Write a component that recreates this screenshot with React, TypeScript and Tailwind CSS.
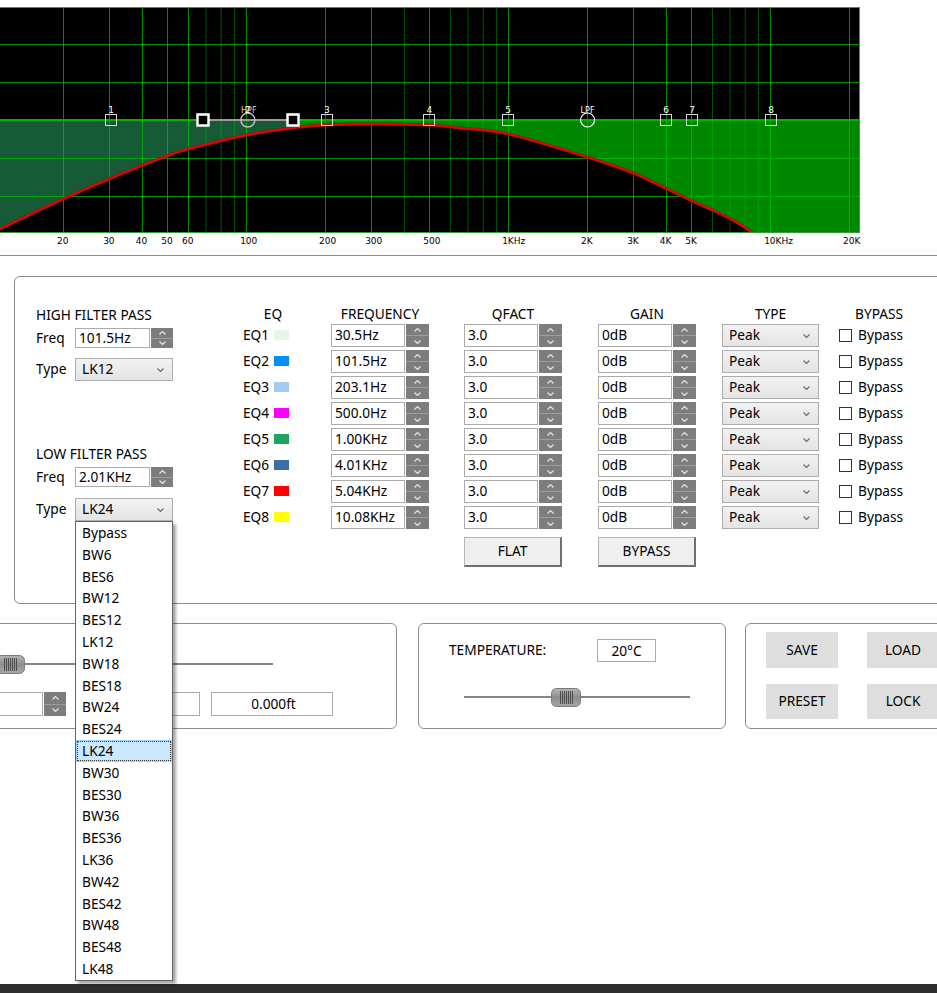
import React from 'react';

// ---- graph helpers ----
const X = (f: number) => 63 + 262 * Math.log10(f / 20);

const curvePts: [number, number][] = [
  [0, 229], [63, 199], [109, 179], [143, 165], [167, 156], [188, 149], [247, 135],
  [293, 128], [325, 125], [371, 124], [429, 125], [460, 128], [508, 134], [587, 157],
  [633, 173], [665, 188], [690, 200], [729, 218], [753, 233], [780, 250],
];

function sample(pts: [number, number][]) {
  const out: [number, number][] = [];
  const n = pts.length;
  for (let i = 0; i < n - 1; i++) {
    const p0 = pts[Math.max(i - 1, 0)];
    const p1 = pts[i];
    const p2 = pts[i + 1];
    const p3 = pts[Math.min(i + 2, n - 1)];
    for (let s = 0; s < 10; s++) {
      const t = s / 10;
      const t2 = t * t;
      const t3 = t2 * t;
      const c = (k: number) =>
        0.5 *
        (2 * p1[k] +
          (-p0[k] + p2[k]) * t +
          (2 * p0[k] - 5 * p1[k] + 4 * p2[k] - p3[k]) * t2 +
          (-p0[k] + 3 * p1[k] - 3 * p2[k] + p3[k]) * t3);
      out.push([c(0), c(1)]);
    }
  }
  out.push(pts[n - 1]);
  return out;
}

const majorF = [20, 30, 40, 50, 60, 100, 200, 300, 500, 1000, 2000, 3000, 4000, 5000, 10000, 20000];
const minorF = [70, 80, 90, 400, 600, 700, 800, 900, 6000, 7000, 8000, 9000];
const axisLabels: [number, string][] = [
  [20, '20'], [30, '30'], [40, '40'], [50, '50'], [60, '60'], [100, '100'], [200, '200'],
  [300, '300'], [500, '500'], [1000, '1KHz'], [2000, '2K'], [3000, '3K'], [4000, '4K'],
  [5000, '5K'], [10000, '10KHz'], [20000, '20K'],
];
const eqPoints: [string, number][] = [
  ['1', 30.5], ['3', 203.1], ['4', 500], ['5', 1000], ['6', 4010], ['7', 5040], ['8', 10080],
];

function Graph() {
  const curve = sample(curvePts);
  const str = (a: [number, number][]) => a.map((p) => `${p[0].toFixed(1)},${p[1].toFixed(1)}`).join(' ');
  const left: [number, number][] = [[0, 120], [293, 120], ...curve.filter((p) => p[0] <= 293).reverse()];
  const right: [number, number][] = [
    [293, 120], [860, 120], [860, 260], [780, 260],
    ...curve.filter((p) => p[0] >= 293).reverse(),
  ];
  const hpf = X(101.5);
  const lpf = X(2010);

  return (
    <svg width={937} height={250} className="block shrink-0" fontFamily="'DejaVu Sans', Verdana, sans-serif">
      <defs>
        <clipPath id="plot">
          <rect x={0} y={7} width={860} height={226} />
        </clipPath>
      </defs>
      <rect x={0} y={7} width={860} height={226} fill="#000" />
      <g clipPath="url(#plot)">
        <polygon points={str(left)} fill="#165a36" />
        <polygon points={str(right)} fill="#008700" />
        {minorF.map((f) => (
          <line key={f} x1={X(f) + 0.5} x2={X(f) + 0.5} y1={7} y2={233} stroke="#00c000" strokeOpacity={0.45} />
        ))}
        {majorF.map((f) => (
          <line key={f} x1={Math.round(X(f)) + 0.5} x2={Math.round(X(f)) + 0.5} y1={7} y2={233} stroke="#00c000" strokeOpacity={0.72} />
        ))}
        {[44.5, 82.5, 158.5, 196.5].map((y) => (
          <line key={y} x1={0} x2={860} y1={y} y2={y} stroke="#00c000" strokeOpacity={0.72} />
        ))}
        <line x1={0} x2={860} y1={120} y2={120} stroke="#00b400" strokeWidth={2} />
        <polyline points={str(curve)} fill="none" stroke="#8a1a10" strokeWidth={3} />
        <polyline points={str(curve)} fill="none" stroke="#f00000" strokeWidth={1.6} />
      </g>
      <line x1={0} x2={860} y1={7.5} y2={7.5} stroke="#3c9c3c" />
      <line x1={0} x2={860} y1={232.5} y2={232.5} stroke="#3c9c3c" />
      <line x1={859.5} x2={859.5} y1={7} y2={233} stroke="#3c9c3c" />

      {/* HPF handle */}
      <line x1={203} x2={293} y1={120} y2={120} stroke="#9a9a9a" strokeWidth={2} />
      <rect x={197.5} y={114.5} width={11} height={11} fill="#000" stroke="#fff" strokeWidth={2.5} />
      <rect x={287.5} y={114.5} width={11} height={11} fill="#000" stroke="#fff" strokeWidth={2.5} />
      <circle cx={hpf} cy={120} r={7} fill="none" stroke="#bdbdbd" strokeWidth={1.5} />
      <text x={hpf + 1} y={113} fontSize={8} fill="#e6c8b0" textAnchor="middle">HPF</text>
      <text x={hpf} y={113} fontSize={9} fill="#fff" textAnchor="middle">2</text>

      {/* LPF */}
      <circle cx={lpf} cy={120} r={7} fill="none" stroke="#fff" strokeWidth={1.2} />
      <text x={lpf} y={113} fontSize={8} fill="#fff" textAnchor="middle">LPF</text>

      {eqPoints.map(([n, f]) => (
        <g key={n}>
          <rect x={Math.round(X(f)) - 5.5} y={114.5} width={11} height={11} fill="none" stroke="#d8d8d8" />
          <text x={X(f)} y={113} fontSize={9} fill="#fff" textAnchor="middle">{n}</text>
        </g>
      ))}

      {axisLabels.map(([f, t]) => (
        <text key={t} x={X(f) - 6} y={244} fontSize={9} fill="#000">{t}</text>
      ))}
    </svg>
  );
}

// ---- controls ----
function Chevron({ up, color = '#e4e4e4' }: { up?: boolean; color?: string }) {
  return (
    <svg width={7} height={4} className="block">
      <polyline
        points={up ? '0.5,3.5 3.5,0.5 6.5,3.5' : '0.5,0.5 3.5,3.5 6.5,0.5'}
        fill="none"
        stroke={color}
        strokeWidth={1.2}
      />
    </svg>
  );
}

function Spin({ className }: { className: string }) {
  return (
    <div className={`flex h-full shrink-0 flex-col bg-[#7d7d7d] ${className}`}>
      <div className="flex flex-1 items-center justify-center border-b border-[#9c9c9c]">
        <Chevron up />
      </div>
      <div className="flex flex-1 items-center justify-center">
        <Chevron />
      </div>
    </div>
  );
}

function Select({ value, className }: { value: string; className: string }) {
  return (
    <div
      className={`flex h-full shrink-0 items-center justify-between border border-[#adadad] bg-gradient-to-b from-[#f2f2f2] to-[#e4e4e4] pl-[6px] pr-[8px] ${className}`}
    >
      <span>{value}</span>
      <Chevron color="#707070" />
    </div>
  );
}

function Thumb() {
  return (
    <svg width={30} height={19} className="block">
      <defs>
        <linearGradient id="thumbg" x1="0" y1="0" x2="0" y2="1">
          <stop offset="0" stopColor="#b4b4b4" />
          <stop offset="0.5" stopColor="#8e8e8e" />
          <stop offset="1" stopColor="#a8a8a8" />
        </linearGradient>
      </defs>
      <rect x={0.5} y={0.5} width={29} height={18} rx={5} fill="url(#thumbg)" stroke="#7a7a7a" />
      {[9, 11, 13, 15, 17, 19, 21].map((x) => (
        <line key={x} x1={x + 0.5} x2={x + 0.5} y1={3} y2={16} stroke="#4e4e4e" />
      ))}
    </svg>
  );
}

const eqRows = [
  { n: 'EQ1', color: 'bg-[#e6f7e6]', f: '30.5Hz' },
  { n: 'EQ2', color: 'bg-[#0a8ef0]', f: '101.5Hz' },
  { n: 'EQ3', color: 'bg-[#a8caf0]', f: '203.1Hz' },
  { n: 'EQ4', color: 'bg-[#ff00ff]', f: '500.0Hz' },
  { n: 'EQ5', color: 'bg-[#1fa362]', f: '1.00KHz' },
  { n: 'EQ6', color: 'bg-[#3b6ea6]', f: '4.01KHz' },
  { n: 'EQ7', color: 'bg-[#ff0000]', f: '5.04KHz' },
  { n: 'EQ8', color: 'bg-[#ffff00]', f: '10.08KHz' },
];

const filterTypes = [
  'Bypass', 'BW6', 'BES6', 'BW12', 'BES12', 'LK12', 'BW18', 'BES18', 'BW24', 'BES24', 'LK24',
  'BW30', 'BES30', 'BW36', 'BES36', 'LK36', 'BW42', 'BES42', 'BW48', 'BES48', 'LK48',
];

const field = 'flex h-full shrink-0 items-center border border-[#ababab] bg-white pl-[3px]';
const btn3d =
  'flex w-[98px] shrink-0 items-center justify-center border border-[#b5b5b5] border-b-2 border-r-2 border-b-[#707070] border-r-[#707070] bg-[#efefef]';

export default function App() {
  return (
    <div className="relative flex h-[993px] w-[937px] flex-col overflow-hidden bg-white font-['Noto_Sans',sans-serif] text-[13.7px] text-black">
      <Graph />
      <div className="mt-[5px] h-px w-full shrink-0 bg-[#8c8c8c]" />

      {/* Filter / EQ panel */}
      <div className="ml-[14px] mt-[20px] flex h-[328px] w-[940px] shrink-0 rounded-[6px] border border-[#8c8c8c] pl-[21px] pt-[28px]">
        <div className="flex w-[137px] shrink-0 flex-col">
          <div className="h-[20px] whitespace-nowrap leading-[20px]">HIGH FILTER PASS</div>
          <div className="mt-[3px] flex h-[20px] items-center">
            <span className="w-[39px] shrink-0">Freq</span>
            <div className={`${field} w-[75px]`}>101.5Hz</div>
            <Spin className="ml-px w-[22px]" />
          </div>
          <div className="mt-[10px] flex h-[23px] items-center">
            <span className="w-[39px] shrink-0">Type</span>
            <Select value="LK12" className="w-[98px]" />
          </div>
          <div className="mt-[63px] h-[20px] whitespace-nowrap leading-[20px]">LOW FILTER PASS</div>
          <div className="mt-[3px] flex h-[20px] items-center">
            <span className="w-[39px] shrink-0">Freq</span>
            <div className={`${field} w-[75px]`}>2.01KHz</div>
            <Spin className="ml-px w-[22px]" />
          </div>
          <div className="mt-[11px] flex h-[23px] items-center">
            <span className="w-[39px] shrink-0">Type</span>
            <Select value="LK24" className="w-[98px]" />
          </div>
        </div>

        <div className="ml-[69px] flex shrink-0 flex-col">
          <div className="flex h-[19px] items-center text-center">
            <div className="w-[62px] shrink-0">EQ</div>
            <div className="ml-[27px] w-[98px] shrink-0">FREQUENCY</div>
            <div className="ml-[35px] w-[98px] shrink-0">QFACT</div>
            <div className="ml-[36px] w-[98px] shrink-0">GAIN</div>
            <div className="ml-[26px] w-[97px] shrink-0">TYPE</div>
            <div className="ml-[20px] w-[80px] shrink-0">BYPASS</div>
          </div>
          {eqRows.map((r, i) => (
            <div key={r.n} className={`flex h-[23px] items-center ${i > 0 ? 'mt-[3px]' : ''}`}>
              <div className="flex w-[62px] shrink-0 items-center">
                <span className="w-[32px] pl-px">{r.n}</span>
                <span className={`h-[10px] w-[15px] ${r.color}`} />
              </div>
              <div className="ml-[27px] flex h-full w-[98px] shrink-0">
                <div className={`${field} w-[74px]`}>{r.f}</div>
                <Spin className="ml-px w-[23px]" />
              </div>
              <div className="ml-[35px] flex h-full w-[98px] shrink-0">
                <div className={`${field} w-[74px]`}>3.0</div>
                <Spin className="ml-px w-[23px]" />
              </div>
              <div className="ml-[36px] flex h-full w-[98px] shrink-0">
                <div className={`${field} w-[74px]`}>0dB</div>
                <Spin className="ml-px w-[23px]" />
              </div>
              <Select value="Peak" className="ml-[26px] w-[97px]" />
              <div className="ml-[20px] flex w-[80px] shrink-0 items-center">
                <span className="h-[13px] w-[13px] border border-[#333] bg-white" />
                <span className="ml-[6px]">Bypass</span>
              </div>
            </div>
          ))}
          <div className="mt-[8px] flex h-[30px]">
            <div className={`ml-[222px] ${btn3d}`}>FLAT</div>
            <div className={`ml-[36px] ${btn3d}`}>BYPASS</div>
          </div>
        </div>
      </div>

      {/* Bottom panels */}
      <div className="mt-[19px] flex h-[106px] shrink-0">
        <div className="-ml-[21px] flex w-[418px] shrink-0 flex-col rounded-[6px] border border-[#8c8c8c]">
          <div className="relative mt-[31px] h-[19px]">
            <div className="absolute left-0 top-[8px] h-[2px] w-[293px] bg-[#858585]" />
            <div className="absolute left-[15px] top-0">
              <Thumb />
            </div>
          </div>
          <div className="mt-[18px] flex h-[24px]">
            <div className={`${field} ml-[3px] w-[60px]`} />
            <Spin className="ml-px w-[22px]" />
            <div className={`${field} ml-[30px] w-[104px]`} />
            <div className={`${field} ml-[11px] w-[122px] justify-center pl-0`}>0.000ft</div>
          </div>
        </div>

        <div className="ml-[21px] flex w-[308px] shrink-0 flex-col rounded-[6px] border border-[#8c8c8c]">
          <div className="mt-[15px] flex h-[23px] items-center">
            <span className="w-[178px] shrink-0 pl-[30px]">TEMPERATURE:</span>
            <div className="flex h-full w-[59px] shrink-0 items-start justify-center border border-[#ababab] pt-[1px]">20°C</div>
          </div>
          <div className="relative ml-[45px] mt-[26px] h-[19px] w-[226px]">
            <div className="absolute left-0 top-[8px] h-[2px] w-full bg-[#858585]" />
            <div className="absolute left-[87px] top-0">
              <Thumb />
            </div>
          </div>
        </div>

        <div className="ml-[19px] flex w-[220px] shrink-0 flex-col rounded-[6px] border border-[#8c8c8c] pl-[20px]">
          <div className="mt-[8px] flex h-[36px]">
            <div className="flex w-[72px] shrink-0 items-center justify-center bg-[#dedede]">SAVE</div>
            <div className="ml-[29px] flex w-[72px] shrink-0 items-center justify-center bg-[#dedede]">LOAD</div>
          </div>
          <div className="mt-[16px] flex h-[35px]">
            <div className="flex w-[72px] shrink-0 items-center justify-center bg-[#dedede]">PRESET</div>
            <div className="ml-[29px] flex w-[72px] shrink-0 items-center justify-center bg-[#dedede]">LOCK</div>
          </div>
        </div>
      </div>

      <div className="mt-auto h-[9px] shrink-0 bg-[#2e2e2e]" />

      {/* Open filter type list */}
      <div className="absolute left-[75px] top-[521px] w-[98px] border border-[#646464] bg-white shadow-[3px_3px_3px_rgba(0,0,0,0.35)]">
        {filterTypes.map((t) =>
          t === 'LK24' ? (
            <div key={t} className="h-[21.8px] border border-[#99d1ff] bg-[#cce8ff]">
              <div className="h-full border border-dotted border-[#333] pl-[4px] leading-[18px]">{t}</div>
            </div>
          ) : (
            <div key={t} className="h-[21.8px] pl-[6px] leading-[21.8px]">
              {t}
            </div>
          ),
        )}
      </div>
    </div>
  );
}
